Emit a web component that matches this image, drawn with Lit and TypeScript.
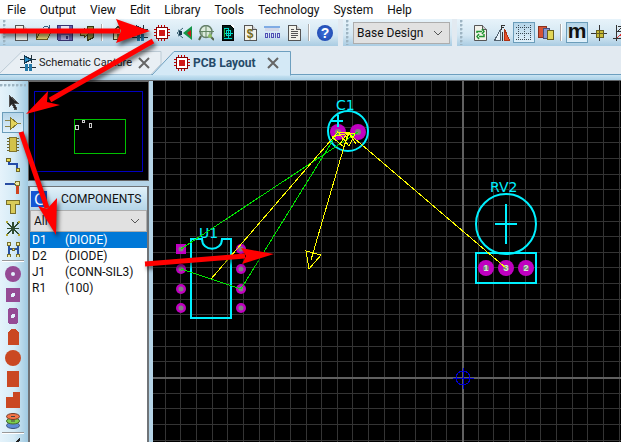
import { LitElement, html, svg, css, TemplateResult, SVGTemplateResult } from "lit";
import { customElement, property, state } from "lit/decorators.js";
import { classMap } from "lit/directives/class-map.js";

const page = svg`<path d="M2.500 .5h8l4 4v11h-12z" fill="#f2f2ea" stroke="#555"/><path d="M10.500 .5v4h4" fill="#ccc" stroke="#555"/>`;
const chip = svg`<path d="M4.500 0v16M7.500 0v16M10.500 0v16M0 4.500h16M0 7.500h16M0 10.500h16" stroke="#c00000"/>
  <rect x="2.500" y="2.500" width="11" height="11" fill="#fff" stroke="#8b0000"/>
  <rect x="5" y="5" width="6" height="6" fill="#d01818"/>`;
const diodes = svg`<path d="M0 4.500h16M0 12.500h16M11.500 0v8M6.500 9v7M9.500 9v7" stroke="#24313a"/>
  <path d="M4.500 1v7l7-3.500z" fill="#2c8fc8" stroke="#16384e"/><path d="M5 9h3v7h-3zM9 9h3v7h-3z" fill="#2378a8"/>`;

const icons: Record<string, SVGTemplateResult> = {
  new: page,
  open: svg`<path d="M1.500 14V5.500h4l1-1h5v3" fill="#c8ba5c" stroke="#665c20"/><path d="M1.500 14.500l3-7h11l-3 7z" fill="#eadb78" stroke="#665c20"/><path d="M8 3c2-3 5-2 6 1M14.500 0v4.500H11" fill="none" stroke="#345f80"/>`,
  save: svg`<path d="M.500 .5h15v15h-14l-1-1z" fill="#6761ad" stroke="#393370"/><path d="M4 1h8v7H4z" fill="#e7e7f2"/><path d="M4 10h8v5H4z" fill="#aaa7d5"/><path d="M9 11h2v3H9z" fill="#393370"/>`,
  exit: svg`<path d="M8.500 1.500h6v11l-6 3z" fill="#8f8b3f" stroke="#393914"/><path d="M1 6h4V3l5 5-5 5v-3H1z" fill="#d2c65d" stroke="#565218"/>`,
  home: svg`<path d="M1.500 7.500l6.500-6 6.500 6M3.500 7v7.500h9V7" fill="#eee8b0" stroke="#3b3b26"/><path d="M7 9h3v5H7z" fill="#80733a"/>`,
  diodes,
  chip,
  viewer: svg`<path d="M16 1v14L7 8z" fill="#169447"/><path d="M11 8l4-3v7z" fill="#c51f16"/><path d="M7 3L1 8l6 5M2 5c4 1 4 5 0 6" fill="none" stroke="#376073"/><path d="M3 6h3v4H3z" fill="#15374c"/>`,
  gerber: svg`<circle cx="8" cy="6.500" r="6" fill="#dcebdc" stroke="#66806b" stroke-width="1.500"/><path d="M1 6.500h15M8 1v11M4 6v5M12 6v5" stroke="#628563"/><path d="M3 11l-2 4M12 11l4 4" stroke="#53654e" stroke-width="2"/><circle cx="12" cy="11" r="2" fill="#8dbc64"/>`,
  explorer: svg`<path d="M2.500 .5h8l3 3v12h-11z" fill="#001c16" stroke="#000"/><path d="M11 0h3v4z" fill="#fff"/><path d="M4 3h5M4 13h8M8.500 4v9M4 8h9M6.500 5.500h4v5h-4z" stroke="#00d8c8" fill="none"/><path d="M4.500 4v8" stroke="#20b840"/>`,
  bill: svg`${page}<text x="8" y="13" text-anchor="middle" font-size="12" fill="#756a20">$</text>`,
  binary: svg`<path d="M0 1.500h16" stroke="#7fabe4" stroke-width="2"/><path d="M1 4.500h14" stroke="#d2d7e8" stroke-width="3"/><path d="M1.500 8.500h2v4h-2zM5.500 8v5M7.500 8.500h2v4h-2zM11.500 8v5M13.500 8.500h2v4h-2z" fill="none" stroke="#5050b5"/>`,
  notes: svg`${page}<path d="M5 4.500h3M5 6.500h7M5 8.500h7M5 10.500h7M5 12.500h5" stroke="#555"/>`,
  refresh: svg`${page}<path d="M5 8V6.500h5M10 4l2 2.500L10 9M12 9v2.500H7M7 9l-2 2.500L7 14" fill="none" stroke="#219632" stroke-width="1.500"/>`,
  mirror: svg`<path d="M.500 15.500h6V4z" fill="#e8f3fa" stroke="#536370"/><path d="M10.500 4v11.500h5z" fill="#e8502a" stroke="#ad3214"/><path d="M8.500 7v9M7.500 0v5M7 .500h4M7 2.500h3" stroke="#333"/>`,
  grid: svg`<path d="M2.500 0v16M8.500 0v16M14.500 0v16M0 2.500h16M0 8.500h16M0 14.500h16" stroke="#394854" stroke-dasharray="1 1"/>`,
  layers: svg`<path d="M.500 1.500h8v11h-8z" fill="#d65234" stroke="#8b321e"/><path d="M5.500 3.500h6v10h-6z" fill="#8997d0" stroke="#46517d"/><path d="M9.500 5.500h6v9h-6z" fill="#e1d657" stroke="#685f1c"/>`,
  origin: svg`<path d="M8.500 0v16M0 8.500h16" stroke="#333"/><path d="M5 5h7v7H5z" fill="#c9bd37" stroke="#665e20"/><path d="M8.500 5v7M5 8.500h7" stroke="#665e20"/>`,
  polar: svg`<path d="M3.500 0v16M0 13.500h16M5 1h5L5 6h6" fill="none" stroke="#333"/><path d="M4 13L14 4" stroke="#d33"/>`,
  pointer: svg`<path d="M4 1v12l3-3 3 6 2-1-3-6h4z" fill="#252525" stroke="#555"/>`,
  gate: svg`<path d="M0 5.500h5M0 11.500h5M13 8.500h4" stroke="#8b8448"/><path d="M5.500 2.500v12l7-6z" fill="#e4d45b" stroke="#81772d"/>`,
  package: svg`<path d="M2 2.500h12M2 5.500h12M2 8.500h12M2 11.500h12M2 14.500h12" stroke="#6b642e"/><path d="M4.500 1.500h7v14h-7z" fill="#d3c24b" stroke="#81752c"/>`,
  trace: svg`<path d="M4 3v4h8v6" fill="none" stroke="#224ba8" stroke-width="2"/><circle cx="3.500" cy="3" r="2" fill="#e7d951" stroke="#6e6626"/><circle cx="13" cy="13" r="2" fill="#e7d951" stroke="#6e6626"/>`,
  via: svg`<path d="M0 6h12" stroke="#284da2" stroke-width="2"/><path d="M12.500 8v8" stroke="#cf431d" stroke-width="3"/><circle cx="12.500" cy="5.500" r="2.500" fill="#eee8a0" stroke="#77702b"/>`,
  zone: svg`<path d="M1.500 1.500h13v4h-4v9h-5v-9h-4z" fill="#d9cb57" stroke="#797029"/>`,
  ratsnest: svg`<path d="M2 2l12 13M14 2L2 15M8 2v12M2 8.500h12" stroke="#304d31" stroke-width="1.500"/><path d="M1 1h2v2H1zM13 1h2v2h-2zM1 14h2v2H1zM13 14h2v2h-2z" fill="#b2a836"/>`,
  connect: svg`<path d="M3.500 2v6h9M3.500 8v6M12.500 2v12" fill="none" stroke="#2851a0" stroke-width="2"/><path d="M2 1h3v3H2zM11 1h3v3h-3zM2 13h3v3H2zM11 13h3v3h-3zM7 7h2v2H7z" fill="#f2eba0" stroke="#77702b"/>`,
  roundPad: svg`<circle cx="8" cy="8" r="8" fill="#954b95"/><circle cx="8" cy="8" r="2" fill="#e2f2fc"/>`,
  squarePad: svg`<path d="M1 1h14v14H1z" fill="#954b95"/><circle cx="8" cy="8" r="2" fill="#e2f2fc"/>`,
  dilPad: svg`<rect x="3" width="10" height="16" rx="3" fill="#954b95"/><circle cx="8" cy="8" r="2" fill="#e2f2fc"/>`,
  edge: svg`<path d="M3 16V3l3-3h4l4 3v13z" fill="#ca4822"/>`,
  smtRound: svg`<circle cx="8" cy="8" r="8" fill="#ca4822"/>`,
  smtRect: svg`<path d="M2 0h12v16H2z" fill="#ca4822"/>`,
  smtPoly: svg`<path d="M8 0h7v16H1V5h7z" fill="#ca4822"/>`,
  stack: svg`<ellipse cx="8" cy="12.500" rx="6.500" ry="3" fill="#5e8bd6" stroke="#3a517b"/><ellipse cx="8" cy="8" rx="6.500" ry="3" fill="#7dce4c" stroke="#466b30"/><ellipse cx="8" cy="3.500" rx="6.500" ry="3" fill="#f27447" stroke="#743a2a"/><path d="M6 3.500h4M6 8h4" stroke="#444"/>`,
  line: svg`<path d="M1 14L15 1" stroke="#222" stroke-width="2"/>`,
  close: svg`<path d="M3 3l10 10M13 3L3 13" stroke="#666" stroke-width="2"/>`,
  chevron: svg`<path d="M4 6l4 4 4-4" fill="none" stroke="#555"/>`,
};

const smooth = new Set(["close", "chevron", "smtRound", "roundPad", "gerber", "refresh", "stack", "viewer"]);
const glyph = (name: string): TemplateResult =>
  html`<svg class="icon" width="16" height="16" viewBox="0 0 16 16" aria-hidden="true"
    shape-rendering=${smooth.has(name) ? "auto" : "crispEdges"}>${icons[name]}</svg>`;

@customElement("tool-button")
class ToolButton extends LitElement {
  @property() name = "";
  @property({ type: Boolean }) pressed = false;
  static styles = css`
    :host { display: block; flex: none; }
    button { box-sizing: border-box; display: grid; place-items: center; width: 22px; height: 21px; padding: 0;
      border: 1px solid transparent; background: none; font: bold 21px "Liberation Sans", sans-serif; line-height: 16px; }
    .pressed { background: linear-gradient(#b4d4e8, #e0f1fb); border-color: #6b9dba; }
    .icon { display: block; }
    .icon text { font-family: "Liberation Sans", sans-serif; font-weight: bold; }
    .help { display: grid; place-items: center; width: 16px; height: 16px; border-radius: 8px;
      background: radial-gradient(#3f72dc, #173fa5); color: #fff; font-size: 14px; line-height: 16px; }
    .metric { line-height: 14px; padding-bottom: 4px; color: #111; }
  `;
  render() {
    const face = this.name === "help" ? html`<span class="help">?</span>`
      : this.name === "metric" ? html`<span class="metric">m</span>` : glyph(this.name);
    return html`<button class=${classMap({ pressed: this.pressed })} aria-label=${this.name}>${face}</button>`;
  }
}

const GRID = 15.65;

@customElement("pcb-canvas")
class PcbCanvas extends LitElement {
  static styles = css`
    :host { display: block; overflow: hidden; background: #000; }
    svg { display: block; width: 100%; height: 100%; }
    .label { font: 14px "DejaVu Sans", sans-serif; fill: #00f0ff; }
    .pin { font: bold 9px "Liberation Sans", sans-serif; fill: #d8e8d8; text-anchor: middle; }
    .outline { fill: none; stroke: #00f0ff; stroke-width: 2; }
    .pad { fill: #c000c0; }
    .hole { fill: #808080; }
    .rat { fill: none; stroke: #00e800; }
    .force { fill: none; stroke: #ffff00; }
    .mark { fill: none; stroke: #0000d0; }
  `;
  render() {
    const steps = Array.from({ length: 160 }, (_, i) => i - 40);
    const lines = steps.map((i) => `M${Math.round(310 + i * GRID) - 0.5} 0V2000M0 ${Math.round(297 + i * GRID) - 0.5}H3000`).join("");
    const pads = [168, 188, 208, 227];
    return html`<svg role="img" aria-label="Board layout">
      <path d=${lines} stroke="#343434" />
      <path d="M310 0V2000M0 297H3000" stroke="#606060" stroke-width="2" />
      ${pads.map((y, i) => svg`
        ${i === 0 ? svg`<rect class="pad" x="23" y=${y - 5} width="10" height="10"/>` : svg`<circle class="pad" cx="28" cy=${y} r="5"/>`}
        <circle class="hole" cx="28" cy=${y} r="2.500"/>
        <circle class="pad" cx="88" cy=${y} r="5"/><circle class="hole" cx="88" cy=${y} r="2.500"/>`)}
      <path class="outline" d="M38 158h11c0 13 20 13 20 0h9v79H38z" />
      <text class="label" x="46" y="157">U1</text>

      <circle class="pad" cx="185" cy="51" r="8" /><circle class="pad" cx="205" cy="51" r="8" />
      <circle class="hole" cx="185" cy="51" r="3" /><circle class="hole" cx="205" cy="51" r="3" />
      <circle class="outline" cx="195" cy="50" r="20" />
      <path class="outline" d="M178 40h12M185 34v12" />
      <text class="label" x="183" y="29">C1</text>

      <circle class="outline" cx="353" cy="143" r="30" />
      <path class="outline" d="M353 123v40M342 143h22M323 172h60v30h-60z" />
      <text class="label" x="337" y="111">RV2</text>
      ${[1, 3, 2].map((n, i) => svg`<circle class="pad" cx=${333 + i * 20} cy="187" r="8"/><circle class="hole" cx=${333 + i * 20} cy="187" r="3"/>
        <text class="pin" x=${333 + i * 20} y="190">${n}</text>`)}

      <g shape-rendering="crispEdges">
        <path class="rat" d="M28 168L205 51M28 188L88 208L185 51" />
        <path class="force" d="M58 198L185 51M195 52L353 187M195 52L158 179" />
        <path class="force" d="M153 170l15 4-12 14zM179 56l17-4-5 14zM185 51l17 2-6 12zM187 63l8-12 8 12" />
        <path class="mark" d="M300 297h21M310 287v21" /><circle class="mark" cx="310" cy="297" r="7" />
      </g>
    </svg>`;
  }
}

const arrowSpecs = [
  { line: "M0 31H120", head: "M150 31L116 19L121 31L116 43z" },
  { line: "M153 41L50 100", head: "M26 114L48 91L47 102L60 105z" },
  { line: "M21 132L47 208", head: "M56 235L38 206L47 209L57 198z" },
  { line: "M145 264L245 256", head: "M274 254L241 248L246 256L242 264z" },
];

@customElement("app-root")
class AppRoot extends LitElement {
  @state() private selected = "D1";

  static styles = css`
    :host { display: flex; flex-direction: column; position: relative; height: 100vh; overflow: hidden;
      background: #e2eaf1; color: #111; font: 12px/16px Roboto, "Open Sans", sans-serif; }
    .menu { display: flex; flex: none; height: 19px; background: #fff; }
    .menu button { padding: 2px 7px 1px; border: 0; background: none; font: inherit; color: #111; white-space: nowrap; }
    .bars { display: flex; flex: none; height: 27px; gap: 5px; }
    .bar { display: flex; flex: none; align-items: center; padding-right: 2px; background: linear-gradient(#e7f3fa, #d3e7f3 60%, #a9cce2); }
    .bar:last-child { flex: 1 0 auto; }
    .grip { width: 3px; height: 25px; margin: 0 4px 0 3px; background: radial-gradient(circle at 1px 1px, #9db4c2 1px, transparent 2px) 0 0 / 3px 4px; }
    .bar:last-child .grip { margin-right: 6px; }
    .sep { width: 2px; height: 17px; margin: 0 4px 0 3px; background: linear-gradient(90deg, #aaa 50%, #fff 50%); }
    .pick { display: flex; position: relative; }
    .pick svg { position: absolute; right: 4px; top: 3px; pointer-events: none; }
    select { box-sizing: border-box; width: 100%; height: 22px; padding: 0 3px; appearance: none; border: 1px solid #adadad;
      border-radius: 0; background: #e1e1e1; color: #111; font: inherit; }
    .design { width: 97px; }
    .tabs { display: flex; flex: none; height: 29px; padding-top: 5px; box-sizing: border-box; border-bottom: 1px solid #6d9fbf; }
    .tab { display: flex; position: relative; flex: none; align-items: center; justify-content: space-between; height: 24px; }
    .tab .shape { position: absolute; left: 0; top: 0; }
    .tab button { display: flex; position: relative; align-items: center; gap: 3px; padding: 0; border: 0; background: none; font: inherit; color: #222; white-space: nowrap; }
    .first { width: 152px; padding-left: 20px; box-sizing: border-box; font-size: 11px; }
    .second { width: 139px; padding: 0 10px 0 22px; box-sizing: border-box; }
    .second .name { font-weight: bold; color: #264a68; }
    .strip { flex: none; height: 5px; background: linear-gradient(#c9e4f3, #a9cfe5); border-bottom: 1px solid #606468; }
    .body { display: flex; flex: 1; min-height: 0; background: #b5d4e7; }
    .side { display: flex; flex: none; flex-direction: column; align-items: center; width: 28px; padding-right: 2px; box-sizing: border-box;
      background: linear-gradient(90deg, #e5f3fb, #d5ebf6 50%, #9fc9e1); }
    .rowgrip { width: 26px; height: 3px; margin: 3px 0 4px; flex: none; background: radial-gradient(circle at 1px 1px, #9db4c2 1px, transparent 2px) 0 0 / 4px 3px; }
    .rule { flex: none; width: 22px; height: 2px; margin: 1px 0; background: linear-gradient(#999 50%, #fff 50%); }
    .panel { display: flex; flex: none; flex-direction: column; gap: 5px; width: 121px; margin-right: 4px; }
    .preview { flex: none; height: 100px; box-sizing: border-box; border: 1px solid #666; background: #000; }
    .parts { display: flex; flex: 1; flex-direction: column; box-sizing: border-box; border: solid #707478; border-width: 1px 2px 0; background: #fff; }
    .title { display: flex; flex: none; align-items: center; height: 23px; gap: 14px; padding-left: 1px; background: linear-gradient(#e2f1f9, #b4d5e8); }
    .badge { width: 16px; height: 16px; border: 0; padding: 0; background: #1557d5; color: #fff; font: 16px/16px "Open Sans", sans-serif; }
    .heading { margin: 0; font: inherit; }
    table { border-collapse: collapse; width: 100%; }
    td { height: 16px; padding: 0 2px; line-height: 16px; white-space: nowrap; }
    td:first-child { width: 29px; }
    .chosen { background: #0078d7; color: #fff; }
    pcb-canvas { flex: 1; min-width: 0; }
    .arrows { position: absolute; left: 0; top: 0; pointer-events: none; filter: drop-shadow(2px 3px 2px rgb(0 0 0 / 60%)); }
  `;

  private tools(list: string[], on: string[] = []) {
    return list.map((n) => n === "|" ? html`<span class="sep"></span>` : n === "-" ? html`<span class="rule"></span>`
      : html`<tool-button name=${n} ?pressed=${on.includes(n)}></tool-button>`);
  }

  render() {
    const menus = ["File", "Output", "View", "Edit", "Library", "Tools", "Technology", "System", "Help"];
    const parts = [["D1", "(DIODE)"], ["D2", "(DIODE)"], ["J1", "(CONN-SIL3)"], ["R1", "(100)"]];
    return html`
      <nav class="menu">${menus.map((m) => html`<button>${m}</button>`)}</nav>
      <div class="bars">
        <div class="bar"><span class="grip"></span>${this.tools(["new", "open", "save", "exit", "|", "home", "diodes", "chip", "viewer", "gerber", "explorer", "bill", "binary", "notes", "|", "help"])}</div>
        <div class="bar"><span class="grip"></span><label class="pick design"><select aria-label="Variant"><option>Base Design</option></select>${glyph("chevron")}</label></div>
        <div class="bar"><span class="grip"></span>${this.tools(["refresh", "mirror", "grid", "layers", "|", "metric", "origin", "polar"], ["grid", "metric"])}</div>
      </div>
      <div class="tabs">
        <div class="tab first">
          <svg class="shape" width="164" height="24"><path d="M-1 23L22 .5H161V13L151 23.500" fill="#e9eff4" stroke="#bccbd6" /></svg>
          <button>${glyph("diodes")}<span class="name">Schematic Capture</span></button>
          <button aria-label="Close Schematic Capture">${glyph("close")}</button>
        </div>
        <div class="tab second">
          <svg class="shape" width="139" height="25"><path d="M0 24L22 .5H138.500V24.500" fill="#d4e9f6" stroke="#6d9fbf" /></svg>
          <button>${glyph("chip")}<span class="name">PCB Layout</span></button>
          <button aria-label="Close PCB Layout">${glyph("close")}</button>
        </div>
      </div>
      <div class="strip"></div>
      <div class="body">
        <div class="side"><span class="rowgrip"></span>${this.tools(["pointer", "gate", "package", "trace", "via", "zone", "ratsnest", "connect", "-", "roundPad", "squarePad", "dilPad", "edge", "smtRound", "smtRect", "smtPoly", "stack", "-", "line"], ["gate"])}</div>
        <div class="panel">
          <div class="preview"><svg width="119" height="98" fill="none" shape-rendering="crispEdges" aria-hidden="true">
            <rect x="5.500" y="9.500" width="108" height="80" stroke="#0000c0"/><rect x="45.500" y="37.500" width="51" height="34" stroke="#00c000"/>
            <path d="M46.500 43.500h3v4h-3zM53.500 38.500h2v2h-2zM60.500 41.500h2v4h-2z" stroke="#ccc"/></svg></div>
          <div class="parts">
            <div class="title"><button class="badge">C</button><h2 class="heading">COMPONENTS</h2></div>
            <label class="pick"><select aria-label="Category"><option>All</option></select>${glyph("chevron")}</label>
            <table>${parts.map(([id, kind]) => html`<tr class=${classMap({ chosen: this.selected === id })} @click=${() => (this.selected = id)}><td>${id}</td><td>${kind}</td></tr>`)}</table>
          </div>
        </div>
        <pcb-canvas></pcb-canvas>
      </div>
      <svg class="arrows" width="621" height="442" aria-hidden="true">
        ${arrowSpecs.map((a) => svg`<path d=${a.line} stroke="#f00" stroke-width="5"/><path d=${a.head} fill="#f00"/>`)}
      </svg>`;
  }
}
